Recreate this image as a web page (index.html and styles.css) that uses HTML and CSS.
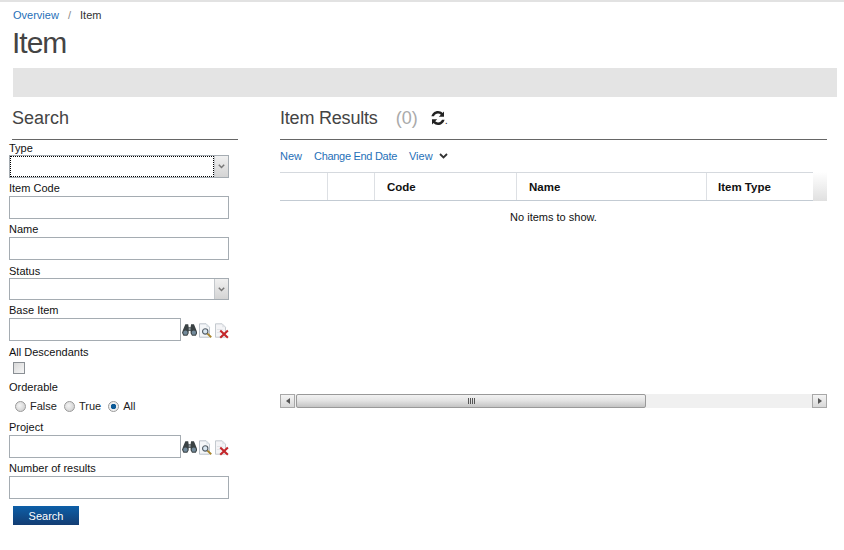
FILE: index.html
```html
<!DOCTYPE html>
<html lang="en">
<head>
  <meta charset="UTF-8">
  <title>Item</title>
  <link rel="stylesheet" href="styles.css">
</head>
<body>
  <svg class="defs" width="0" height="0">
    <symbol id="binoculars" viewBox="0 0 16 12">
      <path fill="#3a4244" d="M3.500 0h3l.5 3h2l.5-3h3L15 6l1 3-1.500 3h-4L9 9.500V7H7v2.500L5.500 12h-4L0 9l1-3z"/>
      <circle cx="3.600" cy="8.800" r="2.300" fill="#71899a"/>
      <circle cx="12.400" cy="8.800" r="2.300" fill="#71899a"/>
      <rect x="7" y="3.500" width="2" height="3" fill="#8f979b"/>
    </symbol>
    <symbol id="pagefind" viewBox="0 0 14 15">
      <path fill="#f4f6f8" stroke="#b8c0c8" d="M.5.500h7l3.500 3.500v10.500H.5z"/>
      <path fill="#dfe5ea" d="M7.500 1v3h3z"/>
      <circle cx="6.500" cy="8.500" r="2.800" fill="#d8e6f0" stroke="#566069" stroke-width="1.200"/>
      <path stroke="#a8842c" stroke-width="2" d="M8.800 10.800l4 3.700"/>
    </symbol>
    <symbol id="pagedel" viewBox="0 0 15 16">
      <path fill="#f4f4f6" stroke="#c0c6cc" d="M.5.500h7l3.500 3.500v10.500H.5z"/>
      <path fill="#e2e4e8" d="M7.500 1v3h3zM2 6h6v1H2zM2 9h4v1H2z"/>
      <path stroke="#c4262a" stroke-width="2.200" d="M5.500 7.500l8 7.500M13.500 7.500l-8 7.500"/>
    </symbol>
  </svg>

  <nav class="crumbs">
    <a href="#">Overview</a>
    <span class="sep">/</span>
    <span>Item</span>
  </nav>
  <h1>Item</h1>
  <div class="band"></div>

  <main class="columns">
    <aside class="search">
      <h2 class="section-title search-title">Search</h2>
      <form>
        <div class="field combo-field">
          <label>Type</label>
          <div class="combo">
            <div class="combo-text focused"></div>
            <span class="combo-btn"><svg width="7" height="5" viewBox="0 0 7 5"><path d="M.8.800l2.700 2.700L6.200.800" fill="none" stroke="#777" stroke-width="1.500"/></svg></span>
          </div>
        </div>
        <div class="field">
          <label>Item Code</label>
          <input type="text">
        </div>
        <div class="field">
          <label>Name</label>
          <input type="text">
        </div>
        <div class="field combo-field">
          <label>Status</label>
          <div class="combo combo-short">
            <div class="combo-text"></div>
            <span class="combo-btn"><svg width="7" height="5" viewBox="0 0 7 5"><path d="M.8.800l2.700 2.700L6.200.800" fill="none" stroke="#777" stroke-width="1.500"/></svg></span>
          </div>
        </div>
        <div class="field lookup-field">
          <label>Base Item</label>
          <div class="lookup">
            <input type="text">
            <svg class="ic-bin"><use href="#binoculars"/></svg>
            <svg class="ic-find"><use href="#pagefind"/></svg>
            <svg class="ic-del"><use href="#pagedel"/></svg>
          </div>
        </div>
        <div class="field check-field">
          <label>All Descendants</label>
          <input type="checkbox" class="check">
        </div>
        <div class="field radio-field">
          <label>Orderable</label>
          <div class="radios">
            <label class="radio"><input type="radio" name="orderable">False</label>
            <label class="radio"><input type="radio" name="orderable">True</label>
            <label class="radio"><input type="radio" name="orderable" checked>All</label>
          </div>
        </div>
        <div class="field">
          <label>Project</label>
          <div class="lookup">
            <input type="text">
            <svg class="ic-bin"><use href="#binoculars"/></svg>
            <svg class="ic-find"><use href="#pagefind"/></svg>
            <svg class="ic-del"><use href="#pagedel"/></svg>
          </div>
        </div>
        <div class="field">
          <label>Number of results</label>
          <input type="text">
        </div>
        <button type="button" class="search-btn">Search</button>
      </form>
    </aside>

    <section class="results">
      <h2 class="section-title">
        <span class="results-name">Item Results</span>
        <span class="count">(0)</span>
        <svg class="refresh" width="14" height="14" viewBox="0 0 14 14"><path fill="#222" d="M7 0c1.800 0 3.400.7 4.500 1.900L13 .5v5.200H7.800l2-2C9.100 3 8.100 2.600 7 2.600 5.200 2.600 3.700 3.700 3 5.300H.4C1.200 2.200 3.800 0 7 0zM1 8.300h5.200l-2 2c.7.700 1.700 1.100 2.800 1.100 1.800 0 3.300-1.100 4-2.700h2.600C12.800 11.800 10.200 14 7 14c-1.800 0-3.400-.7-4.500-1.900L1 13.500z"/></svg><span class="dot">.</span>
      </h2>
      <div class="actions">
        <a href="#">New</a>
        <a href="#" class="tight">Change End Date</a>
        <a href="#">View</a>
        <svg width="9" height="6" viewBox="0 0 9 6"><path d="M1 1l3.500 3.500L8 1" fill="none" stroke="#333" stroke-width="1.800"/></svg>
      </div>
      <div class="grid-head">
        <div class="cell c-first"></div>
        <div class="cell c-second"></div>
        <div class="cell c-code">Code</div>
        <div class="cell c-name">Name</div>
        <div class="cell c-type">Item Type</div>
        <div class="head-end"></div>
      </div>
      <div class="grid-body">No items to show.</div>
      <div class="hscroll">
        <span class="sb-btn"><svg width="4" height="6" viewBox="0 0 4 6"><path d="M4 0v6L0 3z" fill="#555"/></svg></span>
        <span class="sb-thumb"><span class="grip"></span></span>
        <span class="sb-track"></span>
        <span class="sb-btn"><svg width="4" height="6" viewBox="0 0 4 6"><path d="M0 0v6l4-3z" fill="#555"/></svg></span>
      </div>
    </section>
  </main>
</body>
</html>
```

FILE: styles.css
```css
html, body {
  margin: 0;
  padding: 0;
}
body {
  font-family: "Liberation Sans", Arial, sans-serif;
  font-size: 11px;
  color: #111;
  background: #fff;
  border-top: 2px solid #e2e2e2;
  height: 548px;
  overflow: hidden;
}
a {
  color: #1f70b8;
  text-decoration: none;
}
.defs {
  position: absolute;
}

/* header */
.crumbs {
  margin-left: 13px;
  height: 13px;
  line-height: 13px;
  padding-top: 7px;
  font-size: 11px;
  color: #333;
}
.crumbs .sep {
  color: #888;
  margin: 0 6px;
}
h1 {
  margin: 2px 0 0 12px;
  font-size: 30px;
  line-height: 37px;
  letter-spacing: -1px;
  font-weight: normal;
  color: #444;
}
.band {
  margin: 7px 7px 0 13px;
  height: 29px;
  background: #e4e4e4;
}

/* columns */
.columns {
  display: flex;
  align-items: flex-start;
}
.search {
  width: 229px;
  margin-left: 9px;
}
.search form {
  width: 220px;
}
.results {
  width: 547px;
  margin-left: 42px;
}
.section-title {
  margin: 0;
  height: 42px;
  line-height: 43px;
  font-size: 18px;
  font-weight: normal;
  color: #444;
  border-bottom: 1px solid #666;
}
.search-title {
  margin-left: 3px;
}
.results-name {
  letter-spacing: -.2px;
}

/* search form */
.field {
  display: flex;
  flex-direction: column;
  margin-bottom: 3px;
}
.field > label {
  height: 15px;
  line-height: 15px;
}
.combo-field > label {
  height: 14px;
  padding-top: 1px;
}
.field input[type=text] {
  box-sizing: border-box;
  height: 23px;
  border: 1px solid #a5acb2;
  background: #fff;
  padding: 0 3px;
  margin: 0;
}
.combo {
  box-sizing: border-box;
  display: flex;
  height: 23px;
  border: 1px solid #a5acb2;
}
.combo-short {
  height: 22px;
}
.combo-text {
  flex: 1;
}
.combo-text.focused {
  margin: 1px;
  outline: 1px dotted #000;
}
.combo-btn {
  width: 13px;
  display: flex;
  align-items: center;
  justify-content: center;
  background: linear-gradient(#f0f0f0, #d4d4d4);
  border-left: 1px solid #c4c8cc;
}
.lookup {
  display: flex;
  align-items: center;
}
.lookup input[type=text] {
  width: 172px;
}
.ic-bin {
  width: 16px;
  height: 12px;
  margin: 0 0 0 1px;
}
.ic-find {
  width: 14px;
  height: 15px;
  margin: 1px 0 0 2px;
}
.ic-del {
  width: 15px;
  height: 16px;
  margin: 2px 0 0 2px;
}
.lookup-field {
  margin-bottom: 4px;
}
.check-field {
  margin-bottom: 6px;
}
.check {
  appearance: none;
  box-sizing: border-box;
  width: 12px;
  height: 12px;
  margin: 2px 0 0 4px;
  border: 1px solid #8a8f94;
  background: linear-gradient(135deg, #d8d8d8, #f6f6f6);
}
.radios {
  display: flex;
  gap: 7px;
  height: 20px;
  padding: 1px 0 0 6px;
  margin-bottom: 1px;
}
.radio {
  display: flex;
  align-items: center;
  gap: 4px;
  color: #222;
}
.radio input {
  appearance: none;
  box-sizing: border-box;
  width: 11px;
  height: 11px;
  margin: 0;
  border: 1px solid #9a9a9a;
  border-radius: 50%;
  background: radial-gradient(circle at 40% 40%, #f4f4f4, #c8c8c8);
}
.radio input:checked {
  background: radial-gradient(circle, #0d5a96 0, #0d5a96 2.500px, #efefef 3px);
}
.search-btn {
  display: block;
  width: 66px;
  height: 19px;
  margin: 7px 0 0 4px;
  padding: 0;
  border: 0;
  font: 11px "Liberation Sans", Arial, sans-serif;
  color: #fff;
  background: linear-gradient(#0d5fa8, #133d73);
}

/* results */
.count {
  color: #aaa;
  margin-left: 13px;
}
.refresh {
  margin-left: 8px;
  vertical-align: -1px;
}
.dot {
  font-size: 11px;
  color: #333;
}
.actions {
  display: flex;
  align-items: center;
  height: 32px;
}
.actions a {
  margin-right: 12px;
}
.actions .tight {
  letter-spacing: -.3px;
}
.actions svg {
  margin-left: -6px;
}
.grid-head {
  display: flex;
  height: 29px;
  box-sizing: border-box;
  border-top: 1px solid #d5d9de;
  border-bottom: 1px solid #c3cbd3;
}
.cell {
  box-sizing: border-box;
  border-right: 1px solid #dde0e4;
  padding-left: 12px;
  line-height: 29px;
  font-size: 11.5px;
  font-weight: bold;
  color: #111;
}
.c-first {
  width: 48px;
}
.c-second {
  width: 47px;
}
.c-code {
  width: 142px;
}
.c-name {
  width: 190px;
}
.c-type {
  width: 106px;
  padding-left: 11px;
  border-right: 0;
}
.head-end {
  flex: 1;
  margin-top: -1px;
  margin-bottom: -1px;
  background: linear-gradient(#fff, #e0e0e0);
}
.grid-body {
  height: 193px;
  padding-top: 9px;
  box-sizing: border-box;
  text-align: center;
  line-height: 14px;
}
.hscroll {
  display: flex;
  height: 14px;
  background: #f0f0f0;
}
.sb-btn {
  box-sizing: border-box;
  width: 15px;
  display: flex;
  align-items: center;
  justify-content: center;
  border: 1px solid #a8a8a8;
  background: linear-gradient(#f4f4f4, #d8d8d8);
}
.sb-thumb {
  box-sizing: border-box;
  width: 350px;
  margin-left: 1px;
  display: flex;
  align-items: center;
  justify-content: center;
  border: 1px solid #999;
  border-radius: 2px;
  background: linear-gradient(#f2f2f2, #e4e4e4 45%, #c4c4c4);
}
.grip {
  width: 7px;
  height: 6px;
  background: repeating-linear-gradient(90deg, #555 0, #555 1px, transparent 1px, transparent 2px);
}
.sb-track {
  flex: 1;
}
```
